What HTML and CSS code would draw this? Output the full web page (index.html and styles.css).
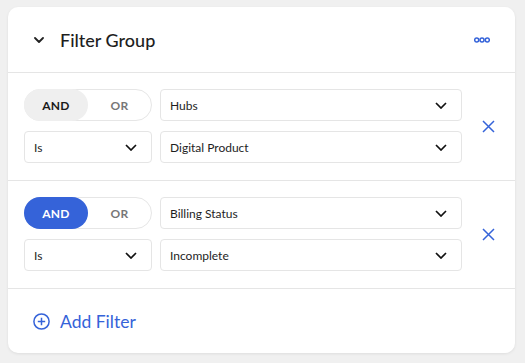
FILE: index.html
```html
<!DOCTYPE html>
<html lang="en">
<head>
  <meta charset="UTF-8" />
  <meta name="viewport" content="width=device-width, initial-scale=1.0" />
  <title>Filter Group</title>
  <link rel="stylesheet" href="styles.css">
</head>
<body>
  <div class="card">
    <div class="card-header">
      <svg class="collapse" width="10" height="6" viewBox="0 0 10 6"><polyline points="1,1 5,5 9,1" fill="none" stroke="#222" stroke-width="1.8" stroke-linecap="round" stroke-linejoin="round"/></svg>
      <h1>Filter Group</h1>
      <svg class="more" width="16" height="6" viewBox="0 0 16 6"><circle cx="2.7" cy="3" r="2" fill="none" stroke="#3563d9" stroke-width="1.5"/><circle cx="8" cy="3" r="2" fill="none" stroke="#3563d9" stroke-width="1.5"/><circle cx="13.3" cy="3" r="2" fill="none" stroke="#3563d9" stroke-width="1.5"/></svg>
    </div>

    <div class="filter">
      <div class="toggle">
        <span class="opt active">AND</span>
        <span class="opt">OR</span>
      </div>
      <div class="select">Hubs<svg width="12" height="7" viewBox="0 0 12 7"><polyline points="1,1 6,6 11,1" fill="none" stroke="#111" stroke-width="1.7"/></svg></div>
      <button class="remove"><svg width="13" height="13" viewBox="0 0 13 13"><path d="M1 1L12 12M12 1L1 12" stroke="#3563d9" stroke-width="1.5"/></svg></button>
      <div class="select">Is<svg width="12" height="7" viewBox="0 0 12 7"><polyline points="1,1 6,6 11,1" fill="none" stroke="#111" stroke-width="1.7"/></svg></div>
      <div class="select">Digital Product<svg width="12" height="7" viewBox="0 0 12 7"><polyline points="1,1 6,6 11,1" fill="none" stroke="#111" stroke-width="1.7"/></svg></div>
    </div>

    <div class="filter">
      <div class="toggle">
        <span class="opt active blue">AND</span>
        <span class="opt">OR</span>
      </div>
      <div class="select">Billing Status<svg width="12" height="7" viewBox="0 0 12 7"><polyline points="1,1 6,6 11,1" fill="none" stroke="#111" stroke-width="1.7"/></svg></div>
      <button class="remove"><svg width="13" height="13" viewBox="0 0 13 13"><path d="M1 1L12 12M12 1L1 12" stroke="#3563d9" stroke-width="1.5"/></svg></button>
      <div class="select">Is<svg width="12" height="7" viewBox="0 0 12 7"><polyline points="1,1 6,6 11,1" fill="none" stroke="#111" stroke-width="1.7"/></svg></div>
      <div class="select">Incomplete<svg width="12" height="7" viewBox="0 0 12 7"><polyline points="1,1 6,6 11,1" fill="none" stroke="#111" stroke-width="1.7"/></svg></div>
    </div>

    <div class="card-footer">
      <svg width="17" height="17" viewBox="0 0 17 17"><circle cx="8.5" cy="8.5" r="7.6" fill="none" stroke="#3563d9" stroke-width="1.5"/><path d="M8.5 4.8V12.2M4.8 8.5H12.2" stroke="#3563d9" stroke-width="1.5"/></svg>
      <span class="add">Add Filter</span>
    </div>
  </div>
</body>
</html>
```

FILE: styles.css
```css
body {
  margin: 0;
  padding: 7px 10px 11px 8px;
  background-color: #f0f0f0;
  font-family: 'Lato', 'Noto Sans', sans-serif;
  color: #222;
}

.card {
  width: 507px;
  background-color: #fff;
  border-radius: 10px;
  box-shadow: 0 1px 3px rgba(0, 0, 0, 0.08);
}

.card-header {
  height: 65px;
  display: flex;
  align-items: center;
  padding: 0 25px 0 26px;
  box-sizing: border-box;
}

.card-header h1 {
  flex: 1;
  margin: 0 0 0 16px;
  font-size: 18px;
  font-weight: 500;
  color: #1e1e1e;
}

.filter {
  border-top: 1px solid #e5e5e5;
  padding: 16px 16px 17px;
  display: grid;
  grid-template-columns: 128px 302px 1fr;
  column-gap: 8px;
  row-gap: 10px;
}

.toggle {
  display: flex;
  height: 32px;
  box-sizing: border-box;
  border: 1px solid #e6e6e6;
  border-radius: 16px;
}

.opt {
  display: flex;
  align-items: center;
  justify-content: center;
  font-size: 12px;
  font-weight: 700;
  letter-spacing: 0.3px;
  color: #777;
  flex: 1;
}

.opt.active {
  flex: 0 0 64px;
  margin: -1px 0 -1px -1px;
  border-radius: 16px;
  background-color: #efefef;
  color: #1a1a1a;
}

.opt.blue {
  background-color: #3563d9;
  color: #fff;
}

.select {
  height: 32px;
  box-sizing: border-box;
  border: 1px solid #e5e5e5;
  border-radius: 4px;
  padding: 0 14px 0 9px;
  display: flex;
  align-items: center;
  justify-content: space-between;
  font-size: 12px;
  color: #1e1e1e;
}

.remove {
  grid-row: span 2;
  align-self: center;
  justify-self: end;
  margin-right: 4px;
  background: none;
  border: none;
  padding: 0;
  display: flex;
}

.card-footer {
  border-top: 1px solid #e5e5e5;
  height: 64px;
  display: flex;
  align-items: center;
  gap: 10px;
  padding-left: 25px;
}

.add {
  font-size: 17.5px;
  color: #3563d9;
}
```
